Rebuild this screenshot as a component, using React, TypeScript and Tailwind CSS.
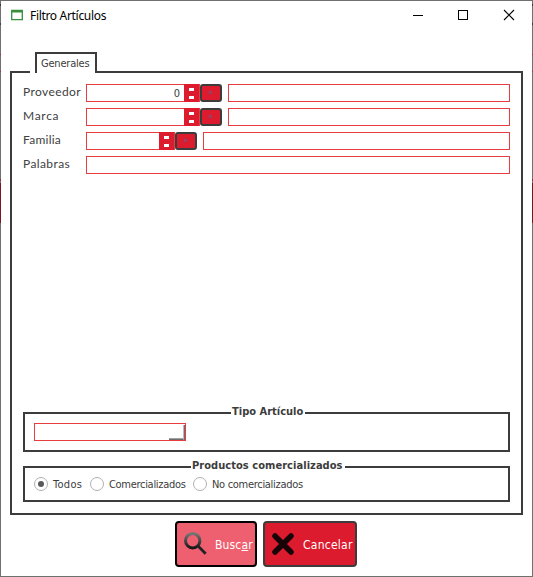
import type { ReactNode } from "react";

const tahoma = "[font-family:'DejaVu_Sans_Condensed','DejaVu_Sans',sans-serif] [font-stretch:condensed]";

function Edge() {
  return (
    <div className="flex w-px shrink-0 flex-col bg-[#707070]">
      <div className="mt-[4px] h-[2px] bg-[#3c3c3c]" />
      <div className="mt-[17px] h-[2px] bg-[#3c3c3c]" />
      <div className="mt-[29px] h-px bg-[#a03038]" />
      <div className="mt-[16px] h-px bg-[#a03038]" />
      <div className="mt-[107px] h-[2px] bg-[#9c2b32]" />
      <div className="mt-[2px] h-[40px] bg-[#7a1725]" />
    </div>
  );
}

function Field({ className = "", children }: { className?: string; children?: ReactNode }) {
  return <div className={`flex h-[18px] border border-[#e83c3e] bg-white ${className}`}>{children}</div>;
}

function Spinner() {
  return (
    <div className="flex h-[18px] w-4 shrink-0 flex-col items-center gap-[5px] border-r border-[#e83c3e] bg-[#dd1b2e] pt-1">
      <div className="h-[3px] w-[5px] bg-white" />
      <div className="h-[3px] w-[5px] bg-white" />
    </div>
  );
}

function Lookup() {
  return (
    <button className="flex h-[18px] w-[22px] shrink-0 items-center justify-center rounded-[3px] border-2 border-[#3c3c3c] bg-[#dd1b2e]">
      <svg className="shrink-0" width="4" height="4" viewBox="0 0 4 4">
        <path d="M0 0h3v3H0z" fill="#9a4166" />
        <path d="M0 4L4 0" stroke="#b02c4a" strokeWidth="1" />
      </svg>
    </button>
  );
}

function Row({ label, labelClass, children }: { label: string; labelClass: string; children: ReactNode }) {
  return (
    <div className="flex h-[18px]">
      <div className="w-[63px] shrink-0 text-[12px] leading-[16px] text-[#414141] [font-family:Lato,sans-serif] [font-stretch:normal]">
        <span className={labelClass}>{label}</span>
      </div>
      {children}
    </div>
  );
}

function Radio({ label, checked, className, textClass }: { label: string; checked?: boolean; className: string; textClass: string }) {
  return (
    <label className={`flex shrink-0 items-start ${className}`}>
      <span className="flex size-[14px] items-center justify-center rounded-full border border-[#b0b0b0] bg-white">
        {checked && <span className="size-[6px] rounded-full bg-[#595959]" />}
      </span>
      <span className={`ml-[5px] mt-px whitespace-nowrap leading-[14px] ${textClass}`}>{label}</span>
    </label>
  );
}

export default function App() {
  return (
    <div className={`flex h-[577px] w-[533px] overflow-hidden bg-white text-[11px] text-[#3c3c3c] ${tahoma}`}>
      <Edge />
      <div className="flex w-[531px] flex-col border-y border-[#707070]">
        <header className="flex h-[51px] items-start">
          <svg className="ml-[10px] mt-[8px] shrink-0" width="12" height="12" viewBox="0 0 12 12">
            <path d="M0.7 1.3h10.6v9.4H0.7z" fill="#fff" stroke="#388e3c" strokeWidth="1.3" />
            <path d="M1 1h10v2.5H1z" fill="#388e3c" />
          </svg>
          <h1 className="ml-[7px] mt-[7px] text-[12px] leading-4 tracking-[-0.32px] text-black [font-family:'Noto_Sans',sans-serif] [font-stretch:normal]">
            Filtro Artículos
          </h1>
          <svg className="ml-auto mr-[17px] mt-[8px] shrink-0" width="102" height="12" viewBox="0 0 102 12" fill="none" stroke="#000" strokeWidth="1">
            <path d="M0 6.5h10M45.5 1.5h9v9h-9z" shapeRendering="crispEdges" />
            <path d="M91 1l10 10M101 1L91 11" strokeWidth="1.1" />
          </svg>
        </header>

        <div className="ml-[9px] flex h-[21px] w-[513px] items-end">
          <div className="h-[2px] w-[20px] bg-[#3c3c3c]" />
          <div className="ml-[5px] h-[21px] w-[62px] border-x-2 border-t-2 border-[#3c3c3c] pl-[4px] pt-[2px] leading-[16px]">
            <span className="tracking-[-0.2px]">Generales</span>
          </div>
          <div className="h-[2px] flex-1 bg-[#3c3c3c]" />
        </div>

        <main className="ml-[9px] flex h-[442px] w-[513px] flex-col border-x-2 border-b-2 border-[#3c3c3c] px-[11px] pt-[11px]">
          <div className="flex flex-col gap-[6px]">
            <Row label="Proveedor" labelClass="tracking-[0.4px]">
              <Field className="w-[98px] justify-end border-r-0 pr-[4px] leading-[17px]">0</Field>
              <Spinner />
              <Lookup />
              <Field className="ml-[6px] flex-1" />
            </Row>
            <Row label="Marca" labelClass="tracking-[0.7px]">
              <Field className="w-[98px] border-r-0" />
              <Spinner />
              <Lookup />
              <Field className="ml-[6px] flex-1" />
            </Row>
            <Row label="Familia" labelClass="tracking-[0.25px]">
              <Field className="w-[73px] border-r-0" />
              <Spinner />
              <Lookup />
              <Field className="ml-[6px] flex-1" />
            </Row>
            <Row label="Palabras" labelClass="tracking-[0.4px]">
              <Field className="flex-1" />
            </Row>
          </div>

          <section className="mt-[238px] h-[40px] shrink-0 border-2 border-[#3c3c3c] pl-[9px]">
            <h2 className="-mt-[9px] ml-[197px] h-[14px] w-[74px] whitespace-nowrap bg-white pl-px font-bold leading-[14px]">
              Tipo Artículo
            </h2>
            <Field className="mt-[4px] w-[152px] items-end justify-end">
              <div className="order-2 h-[15px] w-px bg-[#6e6e6e]" />
              <div className="order-1 h-[15px] w-[15px] border-b border-r border-b-[#6e6e6e] border-r-[#b5bcbc]">
                <div className="mt-[13px] h-px bg-[#9da3a3]" />
              </div>
            </Field>
          </section>

          <section className="mt-[14px] h-[36px] shrink-0 border-2 border-[#3c3c3c] pl-[9px]">
            <h2 className="-mt-[9px] ml-[157px] h-[14px] w-[154px] whitespace-nowrap bg-white pl-px font-bold leading-[14px] tracking-[0.05px]">
              Productos comercializados
            </h2>
            <div className="mt-[4px] flex h-[14px]">
              <Radio label="Todos" checked className="w-[56px]" textClass="tracking-[0.3px]" />
              <Radio label="Comercializados" className="w-[103px]" textClass="tracking-[-0.3px]" />
              <Radio label="No comercializados" className="" textClass="tracking-[-0.3px]" />
            </div>
          </section>
        </main>

        <footer className="ml-[174px] mt-[6px] flex gap-[6px] text-[12px] text-white">
          <button className="flex h-[46px] w-[82px] items-center rounded-[4px] border-2 border-black bg-[#ee5f70] pl-[6px]">
            <svg className="shrink-0" width="26" height="26" viewBox="0 0 26 26" fill="none">
              <defs>
                <linearGradient id="lens" x1="0" y1="0" x2="0" y2="1">
                  <stop offset="0" stopColor="#777" />
                  <stop offset="1" stopColor="#181818" />
                </linearGradient>
              </defs>
              <circle cx="9.7" cy="9.7" r="7.2" stroke="url(#lens)" strokeWidth="3" />
              <path d="M15 15l7.7 7.8" stroke="#222" strokeWidth="2.8" />
            </svg>
            <span className="ml-[6px] mt-[2px] tracking-[0.15px]">Busc<u className="underline-offset-1">a</u>r</span>
          </button>
          <button className="flex h-[46px] w-[94px] items-center rounded-[4px] border-2 border-[#3c3c3c] bg-[#dd1b2e] pl-[6px]">
            <svg className="shrink-0" width="24" height="24" viewBox="0 0 24 24">
              <path d="M4 4l16 16M20 4L4 20" stroke="#180307" strokeWidth="5.5" strokeLinecap="round" />
            </svg>
            <span className="ml-[8px] mt-[2px] tracking-[0.25px]">Cancelar</span>
          </button>
        </footer>
      </div>
      <Edge />
    </div>
  );
}
